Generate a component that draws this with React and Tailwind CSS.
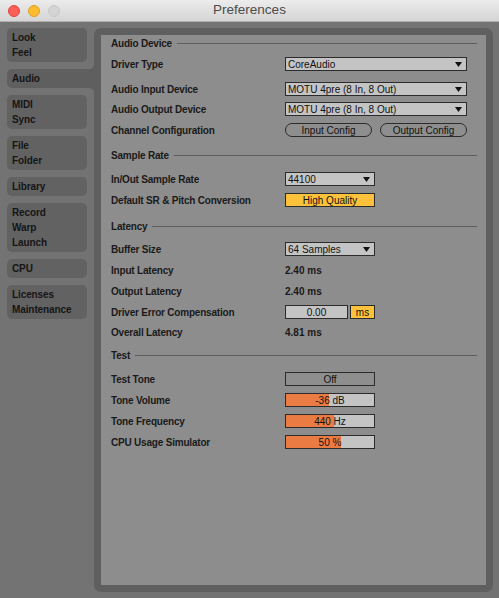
import React from "react";

const font = { fontFamily: '"Liberation Sans", Arial, sans-serif' };

const Tab = ({ lines, active }) => (
  <div
    className={
      active
        ? "relative w-[87px] rounded-l-[5px] bg-[#5f5f5f] py-[2px] pl-[5px]"
        : "w-[80px] rounded-[5px] bg-[#626262] py-[2px] pl-[5px]"
    }
  >
    {active && (
      <>
        <div className="absolute right-0 top-[-5px] h-[5px] w-[5px] bg-[#5f5f5f]">
          <div className="h-full w-full rounded-br-[5px] bg-[#737373]" />
        </div>
        <div className="absolute bottom-[-5px] right-0 h-[5px] w-[5px] bg-[#5f5f5f]">
          <div className="h-full w-full rounded-tr-[5px] bg-[#737373]" />
        </div>
      </>
    )}
    {lines.map((l) => (
      <div key={l} className="text-[10px] font-bold leading-[15px] text-[#151515] tracking-[-0.1px]">
        {l}
      </div>
    ))}
  </div>
);

const Header = ({ title, className }) => (
  <div className={"flex h-[16px] items-center pr-[9px] " + className}>
    <span className="text-[10px] font-bold text-[#1a1a1a] tracking-[-0.2px]">{title}</span>
    <div className="ml-[5px] h-px flex-1 bg-[#5d5d5d]" />
  </div>
);

const Row = ({ label, className, children }) => (
  <div className={"flex h-[20px] items-center " + className}>
    <div className="w-[174px] text-[10px] font-bold text-[#1a1a1a] tracking-[-0.2px]">{label}</div>
    <div className="flex items-center">{children}</div>
  </div>
);

const Arrow = () => (
  <svg width="7" height="5" viewBox="0 0 7 5" className="mr-[4px]">
    <path d="M0 0 H7 L3.5 5 Z" fill="#111" />
  </svg>
);

const Dropdown = ({ value, wide }) => (
  <div
    className={
      (wide ? "w-[182px]" : "w-[90px]") +
      " flex h-[14px] items-center justify-between border border-[#2b2b2b] bg-[#c4c4c4] pl-[2px] text-[10px] text-[#111]"
    }
  >
    <span>{value}</span>
    <Arrow />
  </div>
);

const Box = ({ children, className }) => (
  <div
    className={
      "flex h-[14px] items-center justify-center border border-[#2b2b2b] text-[10px] text-[#111] " + className
    }
  >
    {children}
  </div>
);

const Pill = ({ children }) => (
  <div className="flex h-[14px] w-[87px] items-center justify-center rounded-full border border-[#2b2b2b] bg-[#8e8e8e] text-[10px] text-[#111]">
    {children}
  </div>
);

const Value = ({ children }) => (
  <span className="text-[10px] font-bold text-[#1a1a1a]">{children}</span>
);

export default function App() {
  return (
    <div style={font} className="flex h-[598px] w-[499px] flex-col overflow-hidden bg-[#737373]">
      <div className="relative flex h-[22px] items-center justify-center border-b border-[#b1b1b1] bg-[linear-gradient(#ececec,#d5d5d5)]">
        <div className="absolute left-[8px] top-[5px] flex gap-[8px]">
          <div className="h-[12px] w-[12px] rounded-full border border-[#e0443e] bg-[#fc5f57]" />
          <div className="h-[12px] w-[12px] rounded-full border border-[#dea123] bg-[#fdbc2e]" />
          <div className="h-[12px] w-[12px] rounded-full border border-[#c8c8c8] bg-[#d4d4d4]" />
        </div>
        <span className="text-[13.5px] text-[#4b4b4b]">Preferences</span>
      </div>

      <div className="flex flex-1 pt-[6px] pb-[6px]">
        <div className="flex w-[94px] flex-col gap-[7px] pl-[7px]">
          <Tab lines={["Look", "Feel"]} />
          <Tab lines={["Audio"]} active />
          <Tab lines={["MIDI", "Sync"]} />
          <Tab lines={["File", "Folder"]} />
          <Tab lines={["Library"]} />
          <Tab lines={["Record", "Warp", "Launch"]} />
          <Tab lines={["CPU"]} />
          <Tab lines={["Licenses", "Maintenance"]} />
        </div>

        <div className="w-[399px] rounded-[7px] bg-[#5f5f5f] p-[7px]">
          <div className="h-full bg-[#8d8d8d] pl-[10px]">
            <Header title="Audio Device" />
            <Row label="Driver Type" className="mt-[3px]">
              <Dropdown value="CoreAudio" wide />
            </Row>
            <Row label="Audio Input Device" className="mt-[5px]">
              <Dropdown value="MOTU 4pre (8 In, 8 Out)" wide />
            </Row>
            <Row label="Audio Output Device">
              <Dropdown value="MOTU 4pre (8 In, 8 Out)" wide />
            </Row>
            <Row label="Channel Configuration" className="mt-[1px]">
              <div className="flex gap-[8px]">
                <Pill>Input Config</Pill>
                <Pill>Output Config</Pill>
              </div>
            </Row>

            <Header title="Sample Rate" className="mt-[7px]" />
            <Row label="In/Out Sample Rate" className="mt-[6px]">
              <Dropdown value="44100" />
            </Row>
            <Row label="Default SR & Pitch Conversion" className="mt-[1px]">
              <Box className="w-[90px] bg-[#fdc23c]">High Quality</Box>
            </Row>

            <Header title="Latency" className="mt-[8px]" />
            <Row label="Buffer Size" className="mt-[5px]">
              <Dropdown value="64 Samples" />
            </Row>
            <Row label="Input Latency" className="mt-[1px]">
              <Value>2.40 ms</Value>
            </Row>
            <Row label="Output Latency" className="mt-[1px]">
              <Value>2.40 ms</Value>
            </Row>
            <Row label="Driver Error Compensation" className="mt-[1px]">
              <Box className="w-[63px] bg-[#c4c4c4]">0.00</Box>
              <Box className="ml-[2px] w-[25px] bg-[#fdc23c]">ms</Box>
            </Row>
            <Row label="Overall Latency">
              <Value>4.81 ms</Value>
            </Row>

            <Header title="Test" className="mt-[5px]" />
            <Row label="Test Tone" className="mt-[6px]">
              <Box className="w-[90px] bg-[#8e8e8e]">Off</Box>
            </Row>
            <Row label="Tone Volume" className="mt-[1px]">
              <Box className="w-[90px] bg-[linear-gradient(to_right,#ea7b43_43px,#c4c4c4_43px)]">-36 dB</Box>
            </Row>
            <Row label="Tone Frequency" className="mt-[1px]">
              <Box className="w-[90px] bg-[linear-gradient(to_right,#ea7b43_48px,#c4c4c4_48px)]">440 Hz</Box>
            </Row>
            <Row label="CPU Usage Simulator" className="mt-[1px]">
              <Box className="w-[90px] bg-[linear-gradient(to_right,#ea7b43_55px,#c4c4c4_55px)]">50 %</Box>
            </Row>
          </div>
        </div>
      </div>
    </div>
  );
}
